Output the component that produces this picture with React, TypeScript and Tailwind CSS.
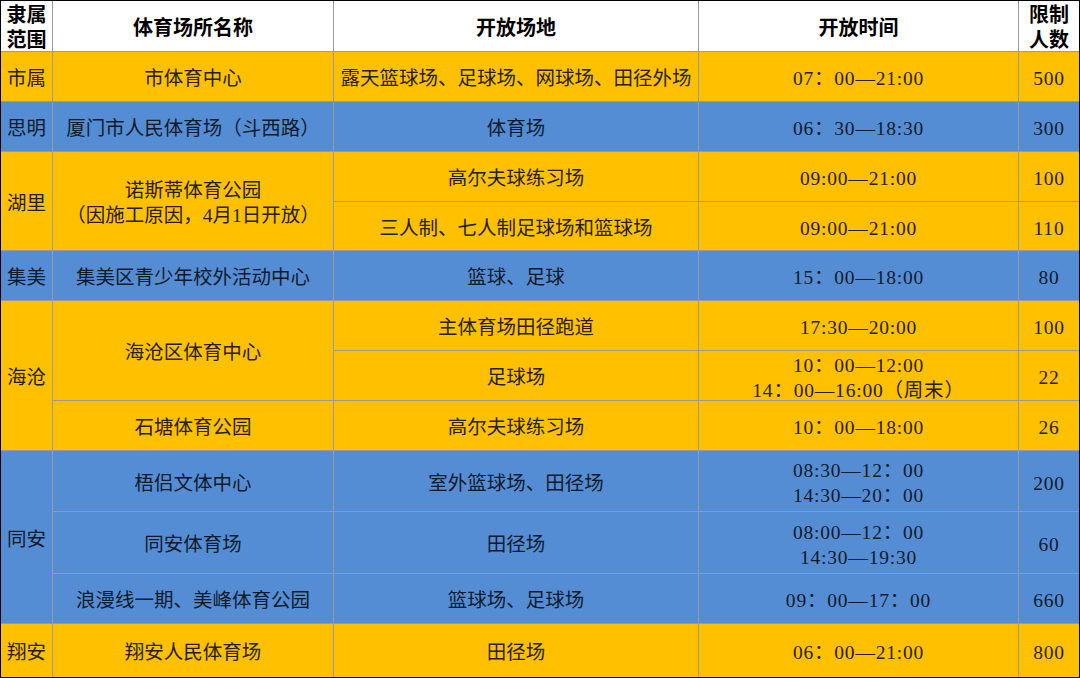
import type { ReactNode } from 'react';

// 厦门体育场地开放信息表 — 橙/蓝分组配色，仿 Excel 截图
type Tone = 'head' | 'y' | 'b';

const TONE: Record<Tone, string> = {
  head: 'bg-white font-bold text-black text-[20px]',
  y: 'bg-[#ffc000] text-[#262000]',
  b: 'bg-[#548dd4] text-[#0f1a2a]',
};

function Cell({
  tone,
  num = false,
  className = '',
  children,
}: {
  tone: Tone;
  num?: boolean;
  className?: string;
  children: ReactNode;
}) {
  return (
    <div
      className={`flex flex-col items-center justify-center border-r border-b border-[#9a9a9a] pt-[4px] text-center leading-[25px] ${
        num ? 'tracking-[0.8px]' : ''
      } ${TONE[tone]} ${className}`}
    >
      {children}
    </div>
  );
}

export default function App() {
  return (
    <div className="h-[678px] w-[1080px] overflow-hidden bg-white">
      <div className="grid h-full w-full grid-cols-[52px_281px_365px_320px_1fr] grid-rows-[51px_50px_50px_50px_49px_50px_50px_50px_50px_61px_62px_50px_1fr] border border-black font-['Liberation_Serif','Noto_Sans_CJK_SC',serif] text-[19.5px]">
        {/* 表头 */}
        <Cell tone="head" className="leading-[23px]">
          <span>隶属</span>
          <span>范围</span>
        </Cell>
        <Cell tone="head">体育场所名称</Cell>
        <Cell tone="head">开放场地</Cell>
        <Cell tone="head">开放时间</Cell>
        <Cell tone="head" className="border-r-0 leading-[23px]">
          <span>限制</span>
          <span>人数</span>
        </Cell>

        {/* 市属 */}
        <Cell tone="y">市属</Cell>
        <Cell tone="y">市体育中心</Cell>
        <Cell tone="y">露天篮球场、足球场、网球场、田径外场</Cell>
        <Cell tone="y" num>07：00—21:00</Cell>
        <Cell tone="y" num className="border-r-0">500</Cell>

        {/* 思明 */}
        <Cell tone="b">思明</Cell>
        <Cell tone="b">厦门市人民体育场（斗西路）</Cell>
        <Cell tone="b">体育场</Cell>
        <Cell tone="b" num>06：30—18:30</Cell>
        <Cell tone="b" num className="border-r-0">300</Cell>

        {/* 湖里 */}
        <Cell tone="y" className="row-span-2">湖里</Cell>
        <Cell tone="y" className="row-span-2">
          <span>诺斯蒂体育公园</span>
          <span>（因施工原因，4月1日开放）</span>
        </Cell>
        <Cell tone="y">高尔夫球练习场</Cell>
        <Cell tone="y" num>09:00—21:00</Cell>
        <Cell tone="y" num className="border-r-0">100</Cell>
        <Cell tone="y">三人制、七人制足球场和篮球场</Cell>
        <Cell tone="y" num>09:00—21:00</Cell>
        <Cell tone="y" num className="border-r-0">110</Cell>

        {/* 集美 */}
        <Cell tone="b">集美</Cell>
        <Cell tone="b">集美区青少年校外活动中心</Cell>
        <Cell tone="b">篮球、足球</Cell>
        <Cell tone="b" num>15：00—18:00</Cell>
        <Cell tone="b" num className="border-r-0">80</Cell>

        {/* 海沧 */}
        <Cell tone="y" className="row-span-3">海沧</Cell>
        <Cell tone="y" className="row-span-2">海沧区体育中心</Cell>
        <Cell tone="y">主体育场田径跑道</Cell>
        <Cell tone="y" num>17:30—20:00</Cell>
        <Cell tone="y" num className="border-r-0">100</Cell>
        <Cell tone="y">足球场</Cell>
        <Cell tone="y" num>
          <span>10：00—12:00</span>
          <span>14：00—16:00（周末）</span>
        </Cell>
        <Cell tone="y" num className="border-r-0">22</Cell>
        <Cell tone="y">石塘体育公园</Cell>
        <Cell tone="y">高尔夫球练习场</Cell>
        <Cell tone="y" num>10：00—18:00</Cell>
        <Cell tone="y" num className="border-r-0">26</Cell>

        {/* 同安 */}
        <Cell tone="b" className="row-span-3">同安</Cell>
        <Cell tone="b">梧侣文体中心</Cell>
        <Cell tone="b">室外篮球场、田径场</Cell>
        <Cell tone="b" num>
          <span>08:30—12：00</span>
          <span>14:30—20：00</span>
        </Cell>
        <Cell tone="b" num className="border-r-0">200</Cell>
        <Cell tone="b">同安体育场</Cell>
        <Cell tone="b">田径场</Cell>
        <Cell tone="b" num>
          <span>08:00—12：00</span>
          <span>14:30—19:30</span>
        </Cell>
        <Cell tone="b" num className="border-r-0">60</Cell>
        <Cell tone="b">浪漫线一期、美峰体育公园</Cell>
        <Cell tone="b">篮球场、足球场</Cell>
        <Cell tone="b" num>09：00—17：00</Cell>
        <Cell tone="b" num className="border-r-0">660</Cell>

        {/* 翔安 */}
        <Cell tone="y" className="border-b-0">翔安</Cell>
        <Cell tone="y" className="border-b-0">翔安人民体育场</Cell>
        <Cell tone="y" className="border-b-0">田径场</Cell>
        <Cell tone="y" num className="border-b-0">06：00—21:00</Cell>
        <Cell tone="y" num className="border-r-0 border-b-0">800</Cell>
      </div>
    </div>
  );
}
